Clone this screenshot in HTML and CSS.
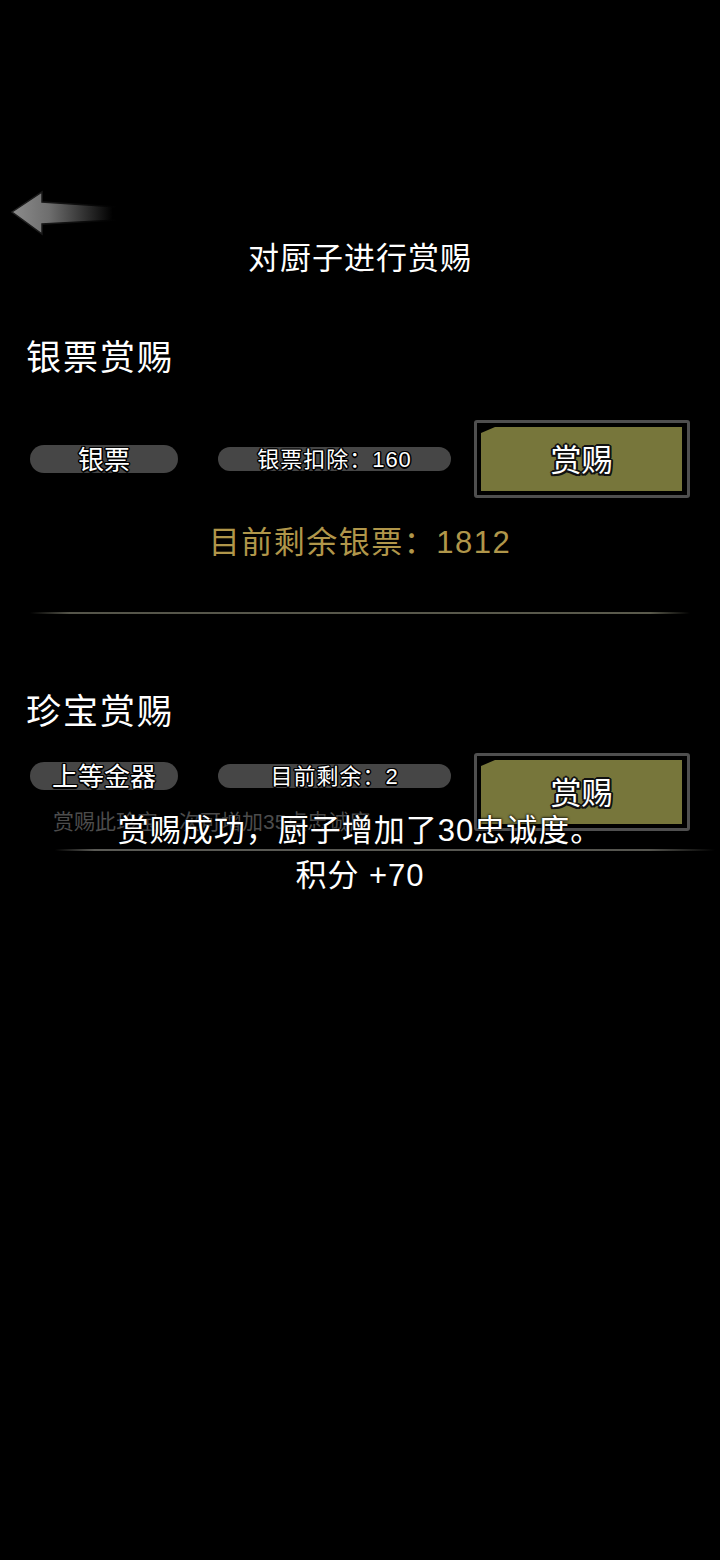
FILE: index.html
```html
<!DOCTYPE html>
<html lang="zh-CN">
<head>
  <meta charset="UTF-8" />
  <meta name="viewport" content="width=device-width, initial-scale=1.0"/>
  <title>对厨子进行赏赐</title>
  <link rel="stylesheet" href="styles.css">
</head>
<body>

  <!-- Header -->
  <div class="header">
    <a href="#" class="back">
      <svg width="110" height="46" viewBox="0 0 110 46">
        <defs>
          <linearGradient id="arrowFade" x1="0" y1="0" x2="1" y2="0">
            <stop offset="0" stop-color="#8c8c8c"/>
            <stop offset="0.35" stop-color="#6e6e6e"/>
            <stop offset="0.95" stop-color="#000"/>
          </linearGradient>
          <linearGradient id="edgeFade" x1="0" y1="0" x2="1" y2="0">
            <stop offset="0" stop-color="#222"/>
            <stop offset="0.5" stop-color="#111"/>
            <stop offset="1" stop-color="#000"/>
          </linearGradient>
        </defs>
        <path d="M2 22 L32 2 L32 12 L108 17 L108 30 L32 34 L32 44 Z"
              fill="url(#arrowFade)" stroke="url(#edgeFade)" stroke-width="1.5"/>
      </svg>
    </a>
    <h1 class="title">对厨子进行赏赐</h1>
  </div>

  <!-- Silver reward -->
  <div class="block">
    <h2 class="block-title">银票赏赐</h2>
    <div class="reward-row">
      <div class="pill pill-name">银票</div>
      <div class="pill pill-info">银票扣除：160</div>
      <button class="reward-btn"><span>赏赐</span></button>
    </div>
    <p class="remain">目前剩余银票：1812</p>
  </div>

  <div class="divider"></div>

  <!-- Treasure reward -->
  <div class="block">
    <h2 class="block-title second">珍宝赏赐</h2>
    <div class="reward-row top">
      <div class="left-col">
        <div class="pill-line">
          <div class="pill pill-name">上等金器</div>
          <div class="pill pill-info">目前剩余：2</div>
        </div>
        <p class="note">赏赐此珍宝一次可增加35点忠诚度</p>
      </div>
      <button class="reward-btn"><span>赏赐</span></button>
    </div>
  </div>

  <div class="divider short"></div>

  <!-- Toast -->
  <div class="toast">
    <p>赏赐成功，厨子增加了30忠诚度。</p>
    <p>积分 +70</p>
  </div>

</body>
</html>
```

FILE: styles.css
```css
body {
  margin: 0;
  background: #000;
  color: #fff;
  font-family: "Liberation Sans", "Noto Sans CJK SC", sans-serif;
  position: relative;
  min-height: 1560px;
}

.header {
  padding-top: 190px;
}

.back {
  display: block;
  width: 110px;
  height: 46px;
  margin-left: 10px;
}

.title {
  margin: 0;
  font-family: "Noto Sans CJK SC", sans-serif;
  font-size: 31px;
  font-weight: 400;
  line-height: 40px;
  text-align: center;
  letter-spacing: 1px;
}

.block-title {
  margin: 56px 0 0 26px;
  font-family: "Noto Sans CJK SC", sans-serif;
  font-size: 35px;
  font-weight: 400;
  line-height: 46px;
  letter-spacing: 2px;
}

.block-title.second {
  margin-top: 72px;
}

.reward-row {
  display: flex;
  align-items: center;
  margin-top: 42px;
  padding-left: 30px;
}

.reward-row.top {
  align-items: flex-start;
  margin-top: 21px;
}

.left-col {
  display: flex;
  flex-direction: column;
  padding-top: 9px;
}

.pill-line {
  display: flex;
  align-items: center;
}

.pill {
  background: #464646;
  border-radius: 14px;
  text-align: center;
  color: #fff;
  text-shadow: -1.5px 0 #000, 1.5px 0 #000, 0 -1.5px #000, 0 1.5px #000,
               -1px -1px #000, 1px 1px #000, -1px 1px #000, 1px -1px #000;
}

.pill-name {
  width: 148px;
  height: 28px;
  line-height: 30px;
  font-size: 26px;
}

.pill-info {
  width: 233px;
  height: 24px;
  line-height: 26px;
  margin-left: 40px;
  font-size: 22px;
  letter-spacing: 1px;
}

.reward-btn {
  width: 216px;
  height: 78px;
  margin-left: 23px;
  padding: 4px 5px 4px 4px;
  background: #000;
  border: 3px solid #4f4f4f;
  border-radius: 3px;
  font-family: inherit;
  cursor: pointer;
}

.reward-btn span {
  display: block;
  height: 100%;
  background: #77763b;
  clip-path: polygon(0 6px, 14px 0, 100% 0, 100% 100%, 0 100%);
  color: #fff;
  font-size: 31px;
  line-height: 67px;
  text-shadow: -2px 0 #111, 2px 0 #111, 0 -2px #111, 0 2px #111,
               -1.5px -1.5px #111, 1.5px 1.5px #111, -1.5px 1.5px #111, 1.5px -1.5px #111;
}

.remain {
  margin: 25px 0 0;
  text-align: center;
  color: #b0964a;
  font-size: 31px;
  line-height: 40px;
  letter-spacing: 1.5px;
}

.divider {
  height: 2px;
  margin: 49px 30px 0;
  background: linear-gradient(to right, transparent, #55554a 6%, #5a5a4c 94%, transparent);
}

.divider.short {
  margin: 13px 5px 0 55px;
  background: linear-gradient(to right, transparent, #5a5a55 6%, #55554f 90%, transparent);
}

.note {
  margin: 18px 0 0 23px;
  color: #4c4c4c;
  font-size: 21px;
  line-height: 28px;
}

.toast {
  position: absolute;
  left: 0;
  right: 0;
  top: 808px;
  text-align: center;
  font-size: 31px;
  line-height: 45px;
  letter-spacing: 1px;
  text-shadow: 0 0 3px #000, 0 0 2px #000;
}

.toast p {
  margin: 0;
}
```
